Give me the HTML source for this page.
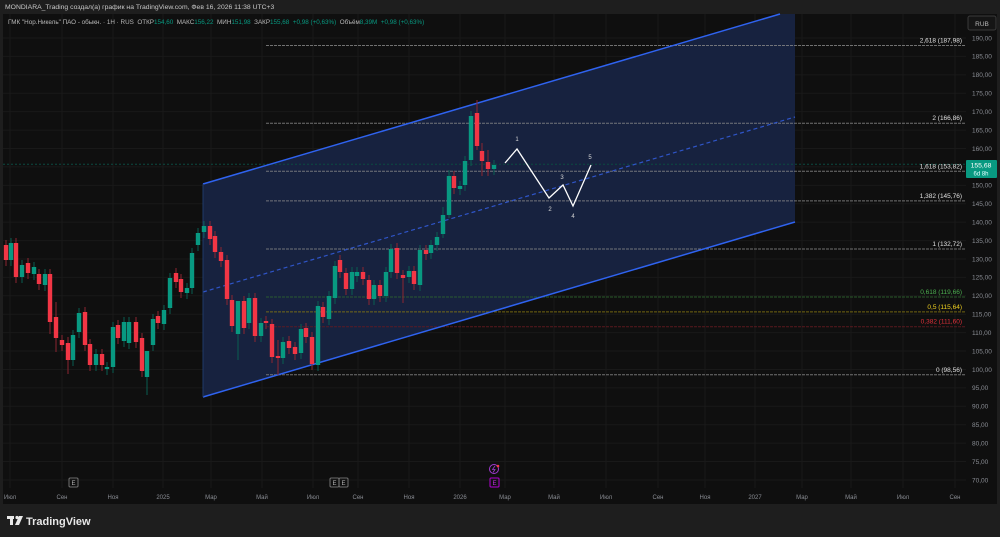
<!DOCTYPE html>
<html><head><meta charset="utf-8"><style>
html,body{margin:0;padding:0;width:1000px;height:537px;overflow:hidden;background:#1e1e1e;font-family:"Liberation Sans",sans-serif}
svg{position:absolute;left:0;top:0}
text{font-family:"Liberation Sans","Noto Sans CJK SC",sans-serif;white-space:pre}
</style></head><body>
<svg width="1000" height="537" xmlns="http://www.w3.org/2000/svg" id="s">
<rect x="0" y="0" width="1000" height="537" fill="#1e1e1e"/>
<rect x="3" y="14" width="963" height="474" fill="#0f0f0f"/>
<rect x="966" y="14" width="31" height="474" fill="#0f0f0f"/>
<rect x="3" y="488" width="994" height="16" fill="#0f0f0f"/>
<g id="grid" stroke="#191919" stroke-width="1"></g>
<polygon points="203,184 780,14 795,14 795,222 203,397" fill="#17223f"/>
<g id="fib" stroke-width="1" stroke-dasharray="3,1"></g>
<line x1="3" y1="164.3" x2="966" y2="164.3" stroke="#0b4a40" stroke-dasharray="2,2"/>
<line x1="203" y1="184" x2="780" y2="14" stroke="#2f63f0" stroke-width="1.5"/>
<line x1="203" y1="397" x2="795" y2="222" stroke="#2f63f0" stroke-width="1.5"/>
<line x1="203" y1="292" x2="795" y2="117" stroke="#2f55c8" stroke-width="1.2" stroke-dasharray="4,3"/>
<line x1="203" y1="184" x2="203" y2="397" stroke="#1f3a6a" stroke-width="1"/>
<g id="c"></g>
<polyline points="505,163 517,149 549,198 563,185 573,206 591,165" fill="none" stroke="#fff" stroke-width="1.3"/>
<g fill="#d6d6d6" font-size="6" text-anchor="middle">
<text x="517" y="141">1</text><text x="550" y="211">2</text><text x="562" y="179">3</text><text x="573" y="218">4</text><text x="590" y="159">5</text></g>
<g id="fl" font-size="6.5" text-anchor="end"></g>
<g id="pa" fill="#8a8d94" font-size="6.5"></g>
<rect x="968" y="16" width="28" height="14" rx="2" fill="#151515" stroke="#3a3a3a"/>
<text x="982" y="26" fill="#b8b8b8" font-size="6.5" text-anchor="middle">RUB</text>
<rect x="966" y="160" width="31" height="18" rx="1" fill="#089981"/>
<text x="981" y="167.5" fill="#fff" font-size="6.8" text-anchor="middle">155,68</text>
<text x="981" y="175.5" fill="#dff" font-size="6" text-anchor="middle">6d 8h</text>
<g id="ta" fill="#8a8d94" font-size="6" text-anchor="middle"></g>
<g fill="none" stroke="#8a8a8a" stroke-width="0.8">
<rect x="69" y="478" width="9" height="9" rx="1"/><rect x="330" y="478" width="9" height="9" rx="1"/><rect x="339" y="478" width="9" height="9" rx="1"/></g>
<g fill="#b5b5b5" font-size="6" text-anchor="middle"><text x="73.5" y="485">E</text><text x="334.5" y="485">E</text><text x="343.5" y="485">E</text></g>
<circle cx="494" cy="469" r="4.5" fill="none" stroke="#a03ad0" stroke-width="1"/>
<path d="M495,466 L492.5,469.5 L495,469.5 L493,472.5" stroke="#a03ad0" fill="none" stroke-width="0.8"/>
<circle cx="498" cy="466" r="1.3" fill="#f23645"/>
<rect x="490" y="478" width="9" height="9" rx="1" fill="none" stroke="#b000d0" stroke-width="1"/>
<text x="494.5" y="485" fill="#c030e0" font-size="6" text-anchor="middle">E</text>
<text x="5" y="9" fill="#c8c8c8" font-size="6.8">MONDIARA_Trading создал(а) график на TradingView.com, Фев 16, 2026 11:38 UTC+3</text>
<text x="8" y="24" font-size="6.3" fill="#b8b8b8">ГМК "Нор.Никель" ПАО - обыкн. · 1H · RUS  ОТКР<tspan fill="#089981">154,60</tspan>  МАКС<tspan fill="#089981">156,22</tspan>  МИН<tspan fill="#089981">151,98</tspan>  ЗАКР<tspan fill="#089981">155,68</tspan>  <tspan fill="#089981">+0,98 (+0,63%)</tspan>  Объём<tspan fill="#089981">8,39M</tspan>  <tspan fill="#089981">+0,98 (+0,63%)</tspan></text>
<g fill="#e8e8e8"><rect x="7" y="516" width="7" height="3"/><rect x="10" y="516" width="3" height="9"/><circle cx="17" cy="517.5" r="1.6"/><path d="M19,516 L23,516 L19,525 L15,525 Z"/></g>
<text x="26" y="525" fill="#e8e8e8" font-size="11" font-weight="bold">TradingView</text>
</svg>
<script>
var ns="http://www.w3.org/2000/svg";
function el(p,t,a,txt){var e=document.createElementNS(ns,t);for(var k in a)e.setAttribute(k,a[k]);if(txt)e.textContent=txt;document.getElementById(p).appendChild(e);}
function y(p){return 38+(190-p)*3.683;}
for(var p=70;p<=190;p+=5){el("grid","line",{x1:3,x2:966,y1:y(p),y2:y(p)});el("pa","text",{x:972,y:y(p)+2.3},p.toFixed(2).replace(".",","));}
var ta=[[10,"Июл"],[62,"Сен"],[113,"Ноя"],[163,"2025"],[211,"Мар"],[262,"Май"],[313,"Июл"],[358,"Сен"],[409,"Ноя"],[460,"2026"],[505,"Мар"],[554,"Май"],[606,"Июл"],[658,"Сен"],[705,"Ноя"],[755,"2027"],[802,"Мар"],[851,"Май"],[903,"Июл"],[955,"Сен"]];
ta.forEach(function(t){el("grid","line",{x1:t[0],x2:t[0],y1:14,y2:488});el("ta","text",{x:t[0],y:499},t[1]);});
var f=[[187.98,"2,618 (187,98)","#8a8a8a","#e0e0e0"],[166.86,"2 (166,86)","#8a8a8a","#e0e0e0"],[153.82,"1,618 (153,82)","#8a8a8a","#e0e0e0"],[145.76,"1,382 (145,76)","#8a8a8a","#e0e0e0"],[132.72,"1 (132,72)","#8a8a8a","#e0e0e0"],[119.66,"0,618 (119,66)","#2f6a30","#4caf50"],[115.64,"0,5 (115,64)","#8a7a10","#f0d020"],[111.60,"0,382 (111,60)","#6a1a20","#e0303a"],[98.56,"0 (98,56)","#8a8a8a","#e0e0e0"]];
f.forEach(function(a){var yy=y(a[0]);el("fib","line",{x1:266,x2:966,y1:yy,y2:yy,stroke:a[2],"stroke-opacity":0.8});el("fl","text",{x:962,y:yy-3,fill:a[3]},a[1]);});
var C=[[6,245,260,0],[11,243,260,1],[16,243,277,0],[22,265,277,1],[28,263,273,0],[34,267,274,1],[39,274,284,0],[45,274,285,1],[50,274,322,0],[56,317,338,0],[62,340,345,0],[68,343,360,0],[73,335,360,1],[79,313,332,1],[85,312,345,0],[90,344,365,0],[96,354,365,1],[102,354,365,0],[107,367,369,1],[113,327,367,1],[118,325,338,0],[124,322,341,1],[129,322,343,1],[136,322,342,0],[142,338,371,0],[147,351,377,1],[153,319,345,1],[158,316,323,0],[164,310,324,1],[170,278,308,1],[176,273,282,0],[181,279,292,0],[187,288,293,1],[192,253,288,1],[198,233,245,1],[204,226,232,1],[210,226,239,0],[215,236,252,0],[221,252,261,0],[227,260,299,0],[232,300,326,0],[238,301,334,1],[244,301,328,0],[249,298,323,1],[255,298,336,0],[261,323,336,1],[266,321,323,0],[272,324,357,0],[278,356,358,0],[283,342,358,1],[289,341,348,0],[295,347,354,0],[301,329,353,1],[306,328,337,0],[312,337,364,0],[318,306,365,1],[323,307,317,0],[329,296,319,1],[335,266,298,1],[340,260,272,0],[346,273,289,0],[352,272,289,1],[357,272,276,1],[363,272,279,0],[369,280,299,0],[374,285,299,1],[380,285,296,0],[386,272,296,1],[391,249,272,1],[397,248,273,0],[403,275,278,0],[409,271,277,1],[414,271,284,0],[420,250,285,1],[426,250,254,0],[431,245,253,1],[437,237,245,1],[443,215,234,1],[449,176,215,1],[454,176,188,0],[460,186,189,1],[465,161,185,1],[471,116,160,1],[477,113,146,0],[482,151,161,0],[488,162,169,0],[494,165,169,1]];
var ext={50:[269,334],56:[302,352],68:[337,374],147:[351,395],238:[301,360],278:[340,375],403:[270,303],477:[100,150],482:[143,176],488:[150,176],443:[207,238],449:[170,218]};
C.forEach(function(c){var col=c[3]?"#089981":"#f23645";var w=ext[c[0]]||[c[1]-5,c[2]+6];
el("c","line",{x1:c[0],x2:c[0],y1:w[0],y2:w[1],stroke:c[3]?"#0a5e50":"#8c2530","stroke-width":1});
el("c","rect",{x:c[0]-2.2,y:c[1],width:4.4,height:Math.max(1.5,c[2]-c[1]),fill:col});});
</script>
</body></html>
